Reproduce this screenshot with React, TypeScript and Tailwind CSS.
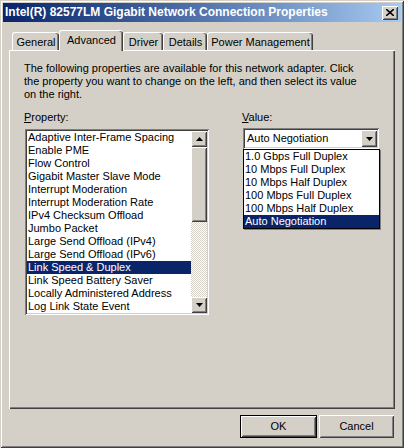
import React from "react";

const raised =
  "shadow-[inset_1px_1px_#ffffff,inset_-1px_-1px_#404040,inset_2px_2px_#d4d0c8,inset_-2px_-2px_#808080]";
const sunken =
  "shadow-[inset_1px_1px_#808080,inset_-1px_-1px_#ffffff,inset_2px_2px_#404040,inset_-2px_-2px_#d4d0c8]";

const properties = [
  "Adaptive Inter-Frame Spacing",
  "Enable PME",
  "Flow Control",
  "Gigabit Master Slave Mode",
  "Interrupt Moderation",
  "Interrupt Moderation Rate",
  "IPv4 Checksum Offload",
  "Jumbo Packet",
  "Large Send Offload (IPv4)",
  "Large Send Offload (IPv6)",
  "Link Speed & Duplex",
  "Link Speed Battery Saver",
  "Locally Administered Address",
  "Log Link State Event",
];

const values = [
  "1.0 Gbps Full Duplex",
  "10 Mbps Full Duplex",
  "10 Mbps Half Duplex",
  "100 Mbps Full Duplex",
  "100 Mbps Half Duplex",
  "Auto Negotiation",
];

const tabs = [
  { label: "General", w: "w-[47px]" },
  { label: "Advanced", w: "w-[64px]", active: true },
  { label: "Driver", w: "w-[40px]" },
  { label: "Details", w: "w-[44px]" },
  { label: "Power Management", w: "w-[106px]" },
];

function Arrow({ down }: { down?: boolean }) {
  return (
    <svg width="7" height="4" viewBox="0 0 7 4">
      {down ? <path d="M0 0H7L3.5 4Z" fill="#000" /> : <path d="M0 4H7L3.5 0Z" fill="#000" />}
    </svg>
  );
}

function ScrollButton({ down }: { down?: boolean }) {
  return (
    <div className={`w-[16px] h-[16px] bg-[#d4d0c8] flex items-center justify-center ${raised}`}>
      <Arrow down={down} />
    </div>
  );
}

export default function App() {
  return (
    <div
      className={`w-[404px] h-[448px] bg-[#d4d0c8] p-[3px] flex flex-col text-[11px] leading-[13px] text-black shadow-[inset_1px_1px_#d4d0c8,inset_-1px_-1px_#404040,inset_2px_2px_#ffffff,inset_-2px_-2px_#808080]`}
      style={{ fontFamily: '"Liberation Sans", Arial, sans-serif' }}
    >
      {/* title bar */}
      <div className="h-[19px] flex items-center justify-between pl-[2px] pr-[3px] bg-gradient-to-r from-[#0a246a] to-[#a6caf0]">
        <span className="text-white font-bold text-[12px]">
          Intel(R) 82577LM Gigabit Network Connection Properties
        </span>
        <div className={`w-[16px] h-[14px] bg-[#d4d0c8] flex items-center justify-center ${raised}`}>
          <svg width="8" height="7" viewBox="0 0 8 7">
            <path d="M0 0L8 7M8 0L0 7" stroke="#000" strokeWidth="1.6" />
          </svg>
        </div>
      </div>

      <div className="mt-[8px] px-[6px]">
        {/* tabs */}
        <div className="flex items-end h-[20px] pl-[3px] relative z-10">
          {tabs.map((t) =>
            t.active ? (
              <div
                key={t.label}
                className={`${t.w} h-[21px] mb-[-1px] bg-[#d4d0c8] rounded-t-[3px] flex justify-center pt-[3px] border-l border-t border-white shadow-[inset_-1px_0_#404040,inset_-2px_0_#808080]`}
              >
                {t.label}
              </div>
            ) : (
              <div
                key={t.label}
                className={`${t.w} h-[18px] bg-[#d4d0c8] rounded-t-[3px] flex justify-center pt-[3px] border-l border-t border-white shadow-[inset_-1px_0_#404040,inset_-2px_0_#808080]`}
              >
                {t.label}
              </div>
            )
          )}
        </div>

        {/* panel */}
        <div className="h-[359px] pl-[15px] pt-[12px] shadow-[inset_1px_1px_#ffffff,inset_-1px_-1px_#404040,inset_-2px_-2px_#808080]">
          <p>
            The following properties are available for this network adapter. Click
            <br />
            the property you want to change on the left, and then select its value
            <br />
            on the right.
          </p>

          <div className="flex mt-[10px]">
            <div className="w-[185px] flex flex-col">
              <div>
                <span className="underline">P</span>roperty:
              </div>
              <div className={`mt-[5px] ml-[1px] h-[186px] bg-white p-[2px] flex ${sunken}`}>
                <div className="flex-1 flex flex-col">
                  {properties.map((p) => (
                    <div
                      key={p}
                      className={`h-[13px] pl-[1px] whitespace-nowrap ${
                        p === "Link Speed & Duplex" ? "bg-[#0a246a] text-white" : ""
                      }`}
                    >
                      {p}
                    </div>
                  ))}
                </div>
                <div className="w-[16px] flex flex-col">
                  <ScrollButton />
                  <div className={`h-[75px] bg-[#d4d0c8] ${raised}`} />
                  <div className="flex-1 bg-[repeating-conic-gradient(#d4d0c8_0_25%,#ffffff_0_50%)] bg-[length:2px_2px]" />
                  <ScrollButton down />
                </div>
              </div>
            </div>

            <div className="ml-[33px] flex flex-col">
              <div>
                <span className="underline">V</span>alue:
              </div>
              <div className="relative mt-[4px] ml-[1px]">
                <div className={`w-[136px] h-[21px] bg-white p-[2px] flex items-center ${sunken}`}>
                  <span className="flex-1 pl-[2px]">Auto Negotiation</span>
                  <div className={`w-[16px] h-[17px] bg-[#d4d0c8] flex items-center justify-center ${raised}`}>
                    <Arrow down />
                  </div>
                </div>
                <div className="absolute left-0 top-full w-[137px] bg-white border border-black shadow-[1px_1px_0_#808080]">
                  {values.map((v) => (
                    <div
                      key={v}
                      className={`h-[13px] pl-[1px] whitespace-nowrap ${
                        v === "Auto Negotiation" ? "bg-[#0a246a] text-white" : ""
                      }`}
                    >
                      {v}
                    </div>
                  ))}
                </div>
              </div>
            </div>
          </div>
        </div>

        {/* buttons */}
        <div className="flex justify-end gap-[2px] mt-[6px] pr-[1px]">
          <div className="w-[77px] h-[23px] border border-black">
            <div className={`w-full h-full bg-[#d4d0c8] flex items-center justify-center ${raised}`}>
              OK
            </div>
          </div>
          <div className={`w-[75px] h-[23px] bg-[#d4d0c8] flex items-center justify-center ${raised}`}>
            Cancel
          </div>
        </div>
      </div>
    </div>
  );
}
